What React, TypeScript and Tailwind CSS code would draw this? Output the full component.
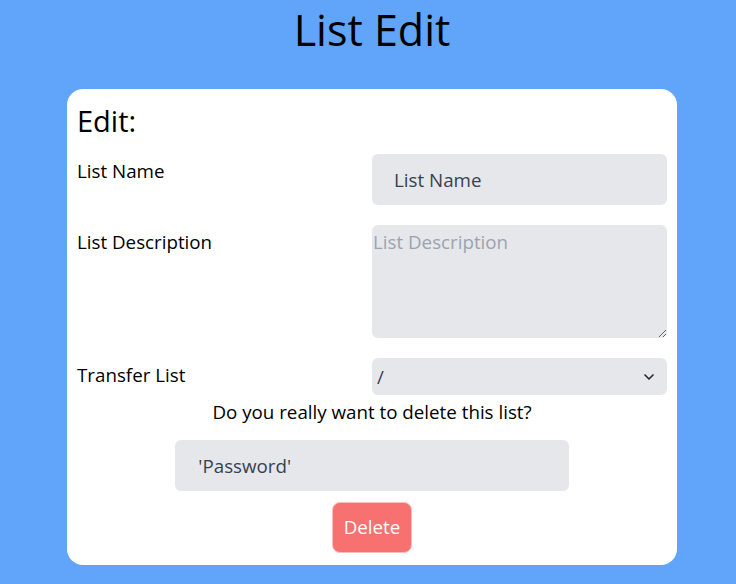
import { ChevronDown } from "lucide-react";

export default function App() {
  return (
    <div
      className="min-h-screen bg-[#60a5fa] pl-[67px] pr-[59px] pb-6 text-black"
      style={{ fontFamily: '"Open Sans", "Noto Sans", sans-serif' }}
    >
      {/* Page title */}
      <h1 className="text-center text-[43px] leading-[59px]">List Edit</h1>

      {/* Edit card */}
      <div className="mt-[30px] rounded-2xl bg-white p-2.5 pb-3">
        <h2 className="text-[29px] leading-[44px] mb-[11px]">Edit:</h2>

        <div className="grid grid-cols-2 gap-y-5 text-[18.75px] leading-7">
          <label className="pt-[3px]">List Name</label>
          <input
            className="h-[51px] rounded-md bg-[#e5e7eb] px-[22px] text-[#374151] outline-none"
            defaultValue="List Name"
          />

          <label className="pt-[3px]">List Description</label>
          <textarea
            className="h-[113px] rounded-md bg-[#e5e7eb] pt-[3px] pl-px text-[#374151] placeholder:text-[#9ca3af] outline-none"
            placeholder="List Description"
          />

          <label className="pt-[3px]">Transfer List</label>
          <div className="relative">
            <select className="h-[37px] w-full appearance-none rounded-md bg-[#e5e7eb] pl-[5px] text-[#374151] outline-none">
              <option>/</option>
            </select>
            <ChevronDown
              className="pointer-events-none absolute right-2.5 top-1/2 h-4 w-4 -translate-y-1/2 text-[#1f2937]"
              strokeWidth={2.5}
            />
          </div>
        </div>

        {/* Delete section */}
        <p className="mt-[3px] text-center text-[18.75px] leading-7">Do you really want to delete this list?</p>
        <input
          className="mx-auto mt-[14px] block h-[51px] w-2/3 rounded-md bg-[#e5e7eb] px-[23px] text-[18.75px] text-[#374151] outline-none"
          defaultValue="'Password'"
        />
        <div className="mt-[11px] flex justify-center">
          <button className="h-[51px] rounded-lg border border-[#fbbcbc] bg-[#f87171] px-[11px] text-[18.75px] text-white">
            Delete
          </button>
        </div>
      </div>
    </div>
  );
}
